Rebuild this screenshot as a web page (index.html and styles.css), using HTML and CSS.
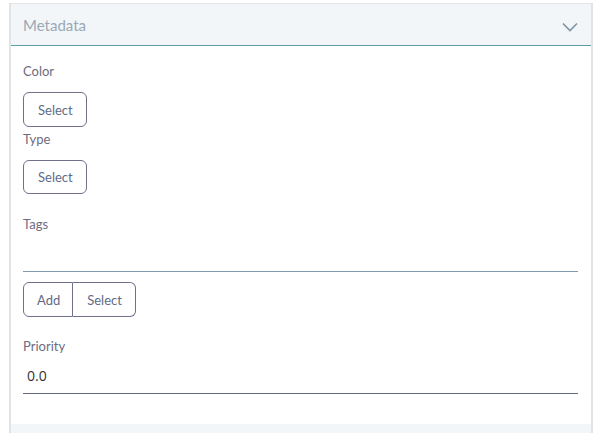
FILE: index.html
```html
<!DOCTYPE html>
<html>
<head>
<meta charset="utf-8">
<link rel="stylesheet" href="styles.css">
</head>
<body>
<div class="page">
  <section class="panel">
    <header class="panel-head">
      <span class="panel-title">Metadata</span>
      <svg class="chev" width="16" height="10" viewBox="0 0 16 10"><path d="M1 1.5 L8 8.5 L15 1.5" fill="none" stroke="#7d92a3" stroke-width="1.6"/></svg>
    </header>
    <div class="panel-body">
      <div class="field field-color">
        <div class="label">Color</div>
        <button class="btn">Select</button>
      </div>
      <div class="field field-type">
        <div class="label">Type</div>
        <button class="btn btn-sm">Select</button>
      </div>
      <div class="field field-tags">
        <div class="label">Tags</div>
        <div class="tag-input"></div>
        <div class="btn-group">
          <button class="btn grp first">Add</button>
          <button class="btn grp last">Select</button>
        </div>
      </div>
      <div class="field field-priority">
        <div class="label">Priority</div>
        <div class="num-input">0.0</div>
      </div>
    </div>
  </section>
  <div class="next-panel"></div>
</div>
</body>
</html>
```

FILE: styles.css
```css
html, body {
  margin: 0;
  padding: 0;
  background: #fff;
  font-family: "Lato", "Liberation Sans", sans-serif;
}
.page {
  padding: 3px 3px 0 9px;
  height: 430px;
  overflow: hidden;
}
.panel {
  border: 1px solid #e2e5e9;
  border-bottom: none;
  border-left: 2px solid #e3e3e3;
  border-right: 2px solid #e3e3e3;
}
.panel-head {
  height: 41px;
  background: #f3f6f9;
  border-bottom: 1px solid #5a9fa6;
  display: flex;
  align-items: center;
  justify-content: space-between;
  padding: 0 13px 0 12px;
}
.panel-title {
  font-size: 15px;
  color: #9aa8b5;
}
.chev {
  margin-top: 4px;
}
.panel-body {
  padding: 16px 13px 30px 12px;
}
.label {
  font-size: 13px;
  line-height: 18px;
  color: #6c6c80;
}
.btn {
  font-family: "Lato", "Liberation Sans", sans-serif;
  font-size: 13px;
  color: #5f6b85;
  background: #fff;
  border: 1px solid #6e7188;
  border-radius: 6px;
  height: 35px;
  padding: 0 13px 0 14px;
  cursor: pointer;
}
.btn-sm {
  height: 34px;
}
.field-color .btn {
  margin-top: 12px;
}
.field-color {
  margin-bottom: 3px;
}
.field-type .btn {
  margin-top: 12px;
}
.field-type {
  margin-bottom: 21px;
}
.tag-input {
  height: 38px;
  border-bottom: 1px solid #7f9bb0;
}
.btn-group {
  display: flex;
  margin-top: 10px;
}
.btn.grp {
  height: 35px;
}
.btn.first {
  border-radius: 6px 0 0 6px;
  padding: 0 12px 0 13px;
}
.btn.last {
  border-left: none;
  border-radius: 0 6px 6px 0;
  padding: 0 13px 0 14px;
}
.field-priority {
  margin-top: 20px;
}
.num-input {
  font-family: "Open Sans", "Noto Sans", sans-serif;
  font-size: 14px;
  color: #333;
  padding: 10px 4px 0;
  height: 28px;
  line-height: 22px;
  border-bottom: 1px solid #666a80;
}
.next-panel {
  margin-top: 0;
  height: 20px;
  background: #f3f6f9;
  border-left: 2px solid #e3e3e3;
  border-right: 2px solid #e3e3e3;
}
```
